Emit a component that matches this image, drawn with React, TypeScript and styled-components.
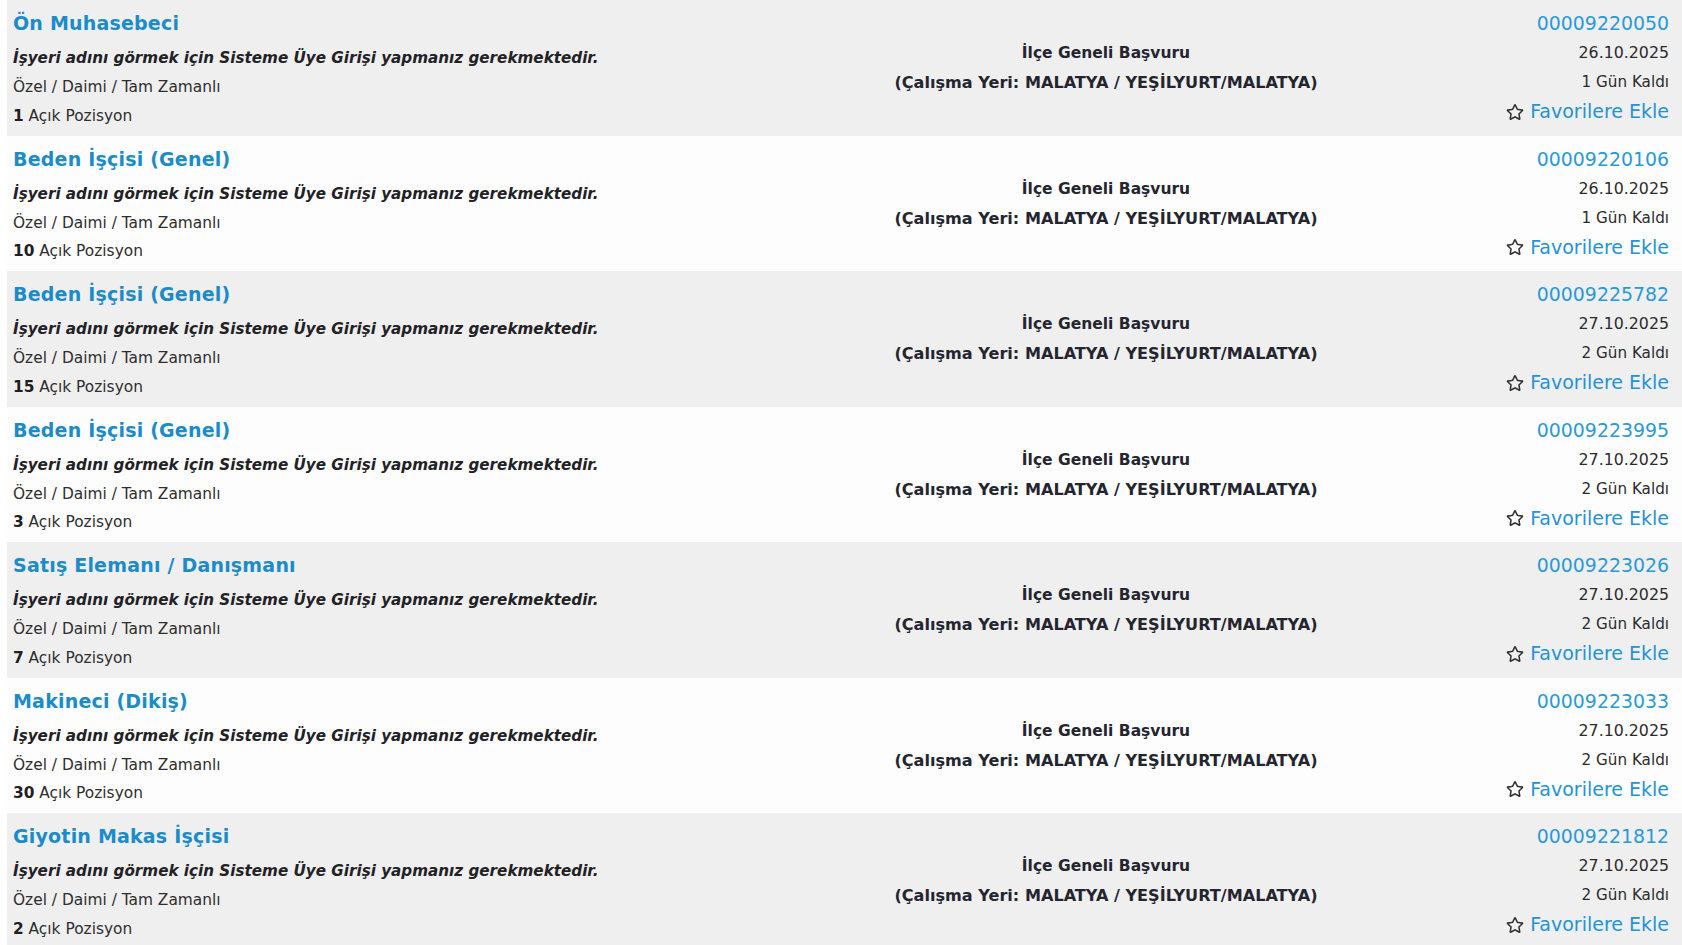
import styled, { createGlobalStyle } from "styled-components";
import { FaRegStar } from "react-icons/fa";

const GlobalStyle = createGlobalStyle`
  html, body {
    margin: 0;
    padding: 0;
    background: #ffffff;
    font-family: "DejaVu Sans", Verdana, sans-serif;
    overflow: hidden;
  }
`

const List = styled.div`
  display: flex;
  flex-direction: column;
  padding-left: 7px;
`

const Row = styled.div<{ $shaded: boolean }>`
  display: grid;
  grid-template-columns: 760px 666px 1fr;
  height: 135.5px;
  box-sizing: border-box;
  padding: 9px 13px 0 6px;
  background: ${({ $shaded }) => ($shaded ? "#efefef" : "#fdfdfd")};
`

const Left = styled.div`
  display: flex;
  flex-direction: column;
  align-items: flex-start;
`

const Title = styled.a`
  font-size: 19px;
  font-weight: 700;
  line-height: 29px;
  color: #1b8cc8;
  text-decoration: none;
  letter-spacing: 0.2px;
`

const Notice = styled.div`
  margin-top: 6px;
  font-size: 15.2px;
  font-weight: 700;
  font-style: italic;
  line-height: 29px;
  color: #222226;
`

const Line = styled.div`
  font-size: 15.4px;
  line-height: 28.5px;
  color: #2e2e2e;

  b {
    font-weight: 700;
    color: #1f1f1f;
  }
`

const Center = styled.div`
  display: flex;
  flex-direction: column;
  align-items: center;
  padding-top: 29px;
  font-size: 16.1px;
  font-weight: 700;
  line-height: 29px;
  color: #24252f;
`

const Area = styled.div`
  font-size: 15.5px;
  line-height: 30px;
`

const Right = styled.div`
  display: flex;
  flex-direction: column;
  align-items: flex-end;
  font-size: 15.8px;
  line-height: 29px;
  color: #2b2b2b;
`

const Remaining = styled.div`
  font-size: 15.2px;
  line-height: 30px;
`

const Code = styled.a`
  font-size: 18.9px;
  color: #2a9ad6;
  text-decoration: none;
`

const Fav = styled.a`
  display: flex;
  align-items: center;
  gap: 6px;
  font-size: 19px;
  color: #2593d3;
  text-decoration: none;

  svg {
    color: #2f2f2f;
  }
`

interface IJob {
  title: string;
  count: number;
  code: string;
  date: string;
  left: string;
}

const jobs: IJob[] = [
  { title: "Ön Muhasebeci", count: 1, code: "00009220050", date: "26.10.2025", left: "1 Gün Kaldı" },
  { title: "Beden İşçisi (Genel)", count: 10, code: "00009220106", date: "26.10.2025", left: "1 Gün Kaldı" },
  { title: "Beden İşçisi (Genel)", count: 15, code: "00009225782", date: "27.10.2025", left: "2 Gün Kaldı" },
  { title: "Beden İşçisi (Genel)", count: 3, code: "00009223995", date: "27.10.2025", left: "2 Gün Kaldı" },
  { title: "Satış Elemanı / Danışmanı", count: 7, code: "00009223026", date: "27.10.2025", left: "2 Gün Kaldı" },
  { title: "Makineci (Dikiş)", count: 30, code: "00009223033", date: "27.10.2025", left: "2 Gün Kaldı" },
  { title: "Giyotin Makas İşçisi", count: 2, code: "00009221812", date: "27.10.2025", left: "2 Gün Kaldı" },
];

const App = () => {
  return (
    <>
      <GlobalStyle />
      <List>
        {jobs.map((job, i) => (
          <Row key={job.code} $shaded={i % 2 === 0}>
            <Left>
              <Title href="#">{job.title}</Title>
              <Notice>İşyeri adını görmek için Sisteme Üye Girişi yapmanız gerekmektedir.</Notice>
              <Line>Özel / Daimi / Tam Zamanlı</Line>
              <Line><b>{job.count}</b> Açık Pozisyon</Line>
            </Left>
            <Center>
              <Area>İlçe Geneli Başvuru</Area>
              <div>(Çalışma Yeri: MALATYA / YEŞİLYURT/MALATYA)</div>
            </Center>
            <Right>
              <Code href="#">{job.code}</Code>
              <div>{job.date}</div>
              <Remaining>{job.left}</Remaining>
              <Fav href="#"><FaRegStar size={18} />Favorilere Ekle</Fav>
            </Right>
          </Row>
        ))}
      </List>
    </>
  )
}

export default App;
